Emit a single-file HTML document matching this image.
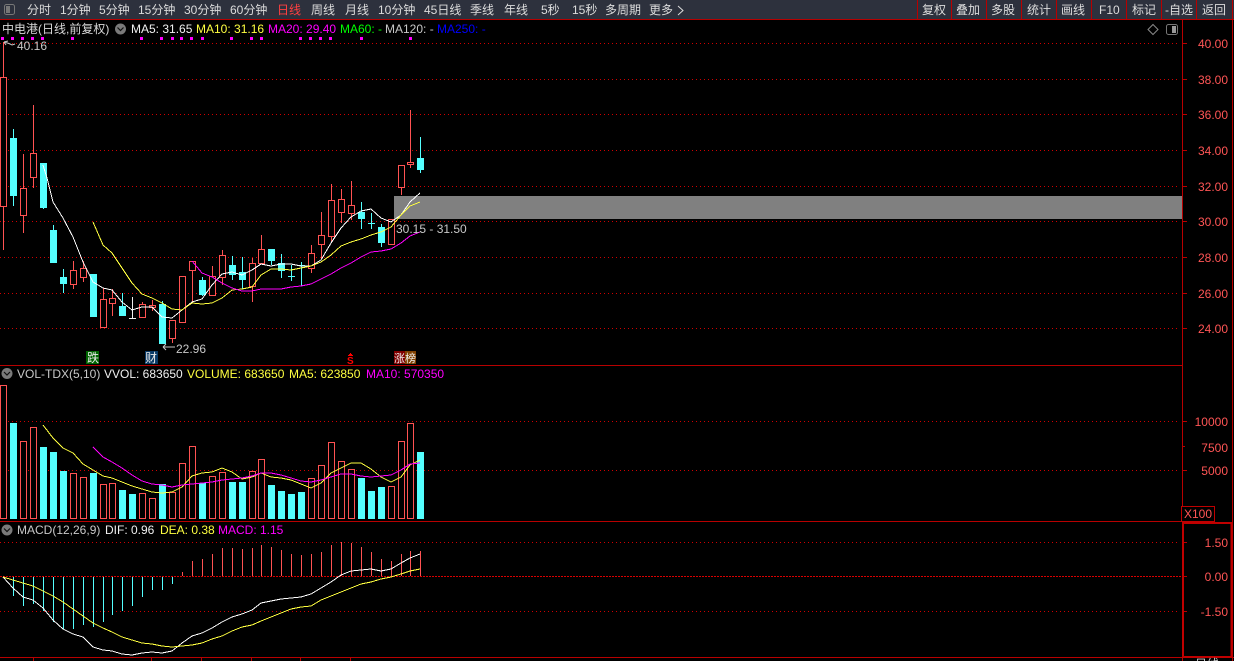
<!DOCTYPE html>
<html><head><meta charset="utf-8"><style>
html,body{margin:0;padding:0;background:#000;width:1234px;height:661px;overflow:hidden}
svg{display:block;position:absolute;left:0;top:0}
text{font-family:"Liberation Sans","WenQuanYi Zen Hei","Noto Sans CJK SC",sans-serif;font-size:12px;white-space:pre}
.c{shape-rendering:crispEdges}
.m{fill:none;shape-rendering:crispEdges}
</style></head><body>
<svg width="1234" height="661" viewBox="0 0 1234 661" xmlns="http://www.w3.org/2000/svg">
<rect x="0" y="0" width="1234" height="19" fill="#2d313d"/>
<!-- frame -->
<g class="c" stroke="#b80000" fill="none">
<path d="M0 19.5H1234M0 365.5H1182M0 521.5H1182M0 657.5H1234M1182.5 19V661M1232.5 0V661"/>
<path d="M917.5 0V19M951.5 0V19M986.5 0V19M1021.5 0V19M1056.5 0V19M1091.5 0V19M1126.5 0V19M1161.5 0V19M1196.5 0V19"/>
<path d="M33.5 657V661M151.5 657V661M201.5 657V661M251.5 657V661M300.5 657V661M350.5 657V661"/>
<path d="M1182 43.5H1187M1182 79.5H1187M1182 114.5H1187M1182 150.5H1187M1182 186.5H1187M1182 221.5H1187M1182 257.5H1187M1182 293.5H1187M1182 328.5H1187M1182 421.5H1187M1182 446.5H1185M1182 470.5H1187M1182 542.5H1187M1182 576.5H1187M1182 611.5H1187M1182 559.5H1184M1182 594.5H1184"/>
</g>
<!-- grids -->
<g class="c" stroke="#d00000" fill="none" stroke-dasharray="1 3">
<path d="M0 43.5H1178M0 79.5H1178M0 114.5H1178M0 150.5H1178M0 186.5H1178M0 221.5H1178M0 257.5H1178M0 293.5H1178M0 328.5H1178"/>
<path d="M0 421.5H1178M0 470.5H1178M0 542.5H1178M0 611.5H1178"/>
</g>
<path class="c" d="M0 576.5H1182" stroke="#d80000" stroke-dasharray="2 1" fill="none"/>
<rect class="c" x="394" y="196" width="788" height="23" fill="#808080"/>
<!-- top bar left icon -->
<rect x="4.500" y="4.500" width="10" height="10" rx="2" fill="#2d313d" stroke="#777"/>
<rect class="c" x="6" y="6" width="4" height="7" fill="#777"/>
<!-- toolbar text -->
<g fill="#dcdcdc">
<text x="27" y="14">分时</text><text x="60" y="14">1分钟</text><text x="99" y="14">5分钟</text><text x="138" y="14">15分钟</text><text x="184" y="14">30分钟</text><text x="230" y="14">60分钟</text>
<text x="277" y="14" fill="#ff4040">日线</text>
<text x="311" y="14">周线</text><text x="345" y="14">月线</text><text x="378" y="14">10分钟</text><text x="424" y="14">45日线</text><text x="470" y="14">季线</text><text x="504" y="14">年线</text><text x="541" y="14">5秒</text><text x="572" y="14">15秒</text><text x="605" y="14">多周期</text><text x="649" y="14">更多</text>
<text x="922" y="14">复权</text><text x="956" y="14">叠加</text><text x="991" y="14">多股</text><text x="1027" y="14">统计</text><text x="1061" y="14">画线</text><text x="1099" y="14">F10</text><text x="1132" y="14">标记</text><text x="1165" y="14">-自选</text><text x="1202" y="14">返回</text>
</g>
<path d="M678 6L683 10.500L678 15" fill="none" stroke="#dcdcdc"/>
<!-- info row -->
<text x="2" y="33" fill="#d8d8d8">中电港(日线,前复权)</text>
<circle cx="120.500" cy="29" r="5.500" fill="#7a7a7a"/><path d="M117.500 27.500L120.500 30.500L123.500 27.500" stroke="#111" fill="none" stroke-width="1.200"/>
<text x="131" y="33" fill="#f0f0f0">MA5: 31.65</text>
<text x="196" y="33" fill="#ffff40">MA10: 31.16</text>
<text x="268" y="33" fill="#ff00ff">MA20: 29.40</text>
<text x="340" y="33" fill="#00ff00">MA60: -</text>
<text x="385" y="33" fill="#c8c8c8">MA120: -</text>
<text x="437" y="33" fill="#0000ff">MA250: -</text>
<path class="c" fill="#ff00ff" d="M1 37h3v3h-3zM11 37h3v3h-3zM21 37h3v3h-3zM31 37h3v3h-3zM41 37h3v3h-3zM71 37h3v3h-3zM140 37h3v3h-3zM160 37h3v3h-3zM171 37h3v3h-3zM180 37h3v3h-3zM190 37h3v3h-3zM201 37h3v3h-3zM230 37h3v3h-3zM250 37h3v3h-3zM260 37h3v3h-3zM299 37h3v3h-3zM309 37h3v3h-3zM319 37h3v3h-3zM329 37h3v3h-3zM360 37h3v3h-3zM409 37h3v3h-3z"/>
<path d="M1153 24.500L1158 29.500L1153 34.500L1148 29.500Z" fill="none" stroke="#8a8a8a"/>
<rect x="1166.500" y="24.500" width="11" height="10" rx="2" fill="none" stroke="#777"/><rect class="c" x="1172" y="26" width="4" height="7" fill="#999"/>
<!-- red wicks -->
<path class="c" stroke="#ff5252" fill="none" d="M3.500 42V250M23.500 154V233M33.500 105V188M73.500 261V289M83.500 261V282M103.500 288V328M112.500 289V316M142.500 302V318M152.500 300V311M172.500 320V343M182.500 276V323M192.500 261V303M212.500 266V296M222.500 250V285M252.500 258V302M261.500 235V263M311.500 245V273M321.500 212V259M331.500 184V243M341.500 189V223M351.500 181V220M391.500 219V245M401.500 165V195M410.500 110V168"/>
<!-- cyan wicks -->
<path class="c" stroke="#54ffff" fill="none" d="M13.500 129V206M43.500 163V209M53.500 225V263M63.500 269V293M93.500 274V317M122.500 293V316M162.500 301V344M202.500 277V296M232.500 256V280M242.500 257V289M271.500 249V265M281.500 254V278M291.500 265V281M288 276.500H295M301.500 262V286M298 265.500H305M361.500 202V229M371.500 213V229M368 223.500H375M381.500 224V247M420.500 137V173"/>
<path class="c" stroke="#f0f0f0" fill="none" d="M132.500 297V318M129 318.500H136"/>
<!-- red bodies -->
<g class="c" fill="#000" stroke="#ff5252">
<rect x="0.500" y="77.500" width="6" height="129"/><rect x="20.500" y="188.500" width="6" height="27"/><rect x="30.500" y="153.500" width="6" height="24"/><rect x="70.500" y="270.500" width="6" height="14"/><rect x="80.500" y="268.500" width="6" height="9"/><rect x="100.500" y="299.500" width="6" height="28"/><rect x="109.500" y="298.500" width="6" height="5"/><rect x="139.500" y="304.500" width="6" height="13"/><rect x="149.500" y="305.500" width="6" height="2"/><rect x="169.500" y="320.500" width="6" height="18"/><rect x="179.500" y="276.500" width="6" height="46"/><rect x="189.500" y="261.500" width="6" height="9"/><rect x="209.500" y="276.500" width="6" height="19"/><rect x="219.500" y="255.500" width="6" height="22"/><rect x="249.500" y="263.500" width="6" height="23"/><rect x="258.500" y="249.500" width="6" height="14"/><rect x="308.500" y="253.500" width="6" height="15"/><rect x="318.500" y="235.500" width="6" height="9"/><rect x="328.500" y="200.500" width="6" height="36"/><rect x="338.500" y="199.500" width="6" height="13"/><rect x="348.500" y="205.500" width="6" height="8"/><rect x="388.500" y="219.500" width="6" height="25"/><rect x="398.500" y="165.500" width="6" height="22"/><rect x="407.500" y="162.500" width="6" height="2"/>
</g>
<!-- cyan bodies -->
<g class="c" fill="#54ffff">
<rect x="10" y="138" width="7" height="58"/><rect x="40" y="163" width="7" height="45"/><rect x="50" y="230" width="7" height="33"/><rect x="60" y="277" width="7" height="7"/><rect x="90" y="274" width="7" height="43"/><rect x="119" y="306" width="7" height="10"/><rect x="159" y="304" width="7" height="40"/><rect x="199" y="280" width="7" height="15"/><rect x="229" y="265" width="7" height="10"/><rect x="239" y="272" width="7" height="8"/><rect x="268" y="249" width="7" height="12"/><rect x="278" y="263" width="7" height="8"/><rect x="358" y="212" width="7" height="7"/><rect x="378" y="227" width="7" height="16"/><rect x="417" y="158" width="7" height="12"/>
</g>
<!-- price MAs -->
<polyline class="m" stroke="#ffffff" points="43,165 47,178 53,202 63,218 73,237 83,262 93,282 103,288 112,290 122,302 132,310 142,307 152,307 162,317 172,318 182,310 192,302 202,299 212,285 222,274 232,272 242,275 252,270 261,264 271,266 281,264 291,264 301,266 311,266 321,260 331,243 341,228 351,217 361,211 371,209 381,218 391,222 401,215 410,202 420,193"/>
<polyline class="m" stroke="#ffff40" points="93,222 103,245 112,253 122,268 132,283 142,294 152,298 162,303 172,309 182,310 192,303 202,304 212,303 222,298 232,290 242,289 252,287 261,275 271,269 281,269 291,270 301,268 311,266 321,262 331,255 341,246 351,242 361,239 371,235 381,232 391,227 401,215 410,206 420,202"/>
<polyline class="m" stroke="#ff00ff" points="192,261 202,273 212,277 222,283 232,288 242,291 252,291 261,289 271,289 281,289 291,287 301,286 311,284 321,279 331,274 341,268 351,263 361,257 371,252 381,251 391,249 401,243 410,236 420,232"/>
<!-- price annotations -->
<path d="M4 42L9 43.500L12 45L15 44M4 42L8 41M4 42L6 45" stroke="#c8c8c8" fill="none"/>
<text x="17" y="50" fill="#c8c8c8">40.16</text>
<path d="M163 347H175M163 347L166 344M163 347L166 350" stroke="#c8c8c8" fill="none"/>
<text x="176" y="353" fill="#c8c8c8">22.96</text>
<text x="396" y="233" fill="#c8c8c8">30.15 - 31.50</text>
<rect class="c" x="86" y="351" width="13" height="13" fill="#006400"/><text x="87" y="362" fill="#e8e8e8">跌</text>
<rect class="c" x="145" y="351" width="13" height="13" fill="#0a3a66"/><text x="145" y="362" fill="#e8e8e8">财</text>
<path class="c" d="M350 353h1v1h1v1h1v1h-5v-1h1v-1h1z" fill="#ff0000"/>
<text x="347" y="364" fill="#ff0000" font-weight="bold" style="font-size:10px">S</text>
<rect class="c" x="394" y="351" width="11" height="13" fill="#800000"/><rect class="c" x="405" y="351" width="11" height="13" fill="#804000"/>
<text x="394" y="362" fill="#f0f0f0" style="font-size:11px">涨</text><text x="405" y="362" fill="#f0f0f0" style="font-size:11px">榜</text>
<!-- axis labels -->
<g fill="#ff5555" text-anchor="end">
<text x="1228" y="48">40.00</text><text x="1228" y="84">38.00</text><text x="1228" y="119">36.00</text><text x="1228" y="155">34.00</text><text x="1228" y="191">32.00</text><text x="1228" y="226">30.00</text><text x="1228" y="262">28.00</text><text x="1228" y="298">26.00</text><text x="1228" y="333">24.00</text>
<text x="1228" y="426">10000</text><text x="1228" y="452">7500</text><text x="1228" y="475">5000</text>
<text x="1228" y="547">1.50</text><text x="1228" y="581">0.00</text><text x="1228" y="616">-1.50</text>
</g>
<!-- volume header -->
<circle cx="7" cy="373.500" r="5.500" fill="#7a7a7a"/><path d="M4 372L7 375L10 372" stroke="#111" fill="none" stroke-width="1.200"/>
<text x="17" y="378" fill="#c8c8c8">VOL-TDX(5,10)</text>
<text x="104" y="378" fill="#f0f0f0">VVOL: 683650</text>
<text x="187" y="378" fill="#ffff40">VOLUME: 683650</text>
<text x="289" y="378" fill="#ffff40">MA5: 623850</text>
<text x="366" y="378" fill="#ff00ff">MA10: 570350</text>
<!-- volume bars -->
<g class="c" fill="#000" stroke="#ff5252">
<rect x="0.500" y="385.500" width="6" height="133"/><rect x="20.500" y="441.500" width="6" height="77"/><rect x="30.500" y="427.500" width="6" height="91"/><rect x="70.500" y="473.500" width="6" height="45"/><rect x="80.500" y="477.500" width="6" height="41"/><rect x="100.500" y="484.500" width="6" height="34"/><rect x="109.500" y="483.500" width="6" height="35"/><rect x="139.500" y="493.500" width="6" height="25"/><rect x="149.500" y="498.500" width="6" height="20"/><rect x="169.500" y="492.500" width="6" height="26"/><rect x="179.500" y="463.500" width="6" height="55"/><rect x="189.500" y="446.500" width="6" height="72"/><rect x="209.500" y="476.500" width="6" height="42"/><rect x="219.500" y="472.500" width="6" height="46"/><rect x="249.500" y="471.500" width="6" height="47"/><rect x="258.500" y="459.500" width="6" height="59"/><rect x="308.500" y="478.500" width="6" height="40"/><rect x="318.500" y="465.500" width="6" height="53"/><rect x="328.500" y="442.500" width="6" height="76"/><rect x="338.500" y="461.500" width="6" height="57"/><rect x="348.500" y="469.500" width="6" height="49"/><rect x="388.500" y="486.500" width="6" height="32"/><rect x="398.500" y="441.500" width="6" height="77"/><rect x="407.500" y="423.500" width="6" height="95"/>
</g>
<g class="c" fill="#54ffff">
<rect x="10" y="423" width="7" height="96"/><rect x="40" y="447" width="7" height="72"/><rect x="50" y="452" width="7" height="67"/><rect x="60" y="471" width="7" height="48"/><rect x="90" y="473" width="7" height="46"/><rect x="119" y="490" width="7" height="29"/><rect x="129" y="494" width="7" height="25"/><rect x="159" y="484" width="7" height="35"/><rect x="199" y="483" width="7" height="36"/><rect x="229" y="482" width="7" height="37"/><rect x="239" y="482" width="7" height="37"/><rect x="268" y="485" width="7" height="34"/><rect x="278" y="491" width="7" height="28"/><rect x="288" y="494" width="7" height="25"/><rect x="298" y="492" width="7" height="27"/><rect x="358" y="478" width="7" height="41"/><rect x="368" y="491" width="7" height="28"/><rect x="378" y="487" width="7" height="32"/><rect x="417" y="452" width="7" height="67"/>
</g>
<polyline class="m" stroke="#ffff40" points="43,425 53,438 63,448 73,453 83,464 93,470 103,476 112,478 122,482 132,486 142,489 152,492 162,493 172,492 182,487 192,476 202,473 212,472 222,468 232,472 242,479 252,477 261,473 271,477 281,478 291,480 301,484 311,488 321,483 331,473 341,468 351,463 361,463 371,469 381,477 391,482 401,477 410,465 420,460"/>
<polyline class="m" stroke="#ff00ff" points="93,447 103,457 112,462 122,468 132,475 142,481 152,484 162,485 172,487 182,485 192,484 202,483 212,482 222,480 232,479 242,478 252,476 261,473 271,473 281,475 291,478 301,481 311,482 321,480 331,477 341,474 351,474 361,476 371,477 381,476 391,475 401,470 410,464 420,463"/>
<!-- macd header -->
<circle cx="7" cy="530" r="5.500" fill="#7a7a7a"/><path d="M4 528.500L7 531.500L10 528.500" stroke="#111" fill="none" stroke-width="1.200"/>
<text x="17" y="534" fill="#c8c8c8">MACD(12,26,9)</text>
<text x="105" y="534" fill="#f0f0f0">DIF: 0.96</text>
<text x="160" y="534" fill="#ffff40">DEA: 0.38</text>
<text x="218" y="534" fill="#ff00ff">MACD: 1.15</text>
<!-- macd bars -->
<path class="c" stroke="#54ffff" fill="none" d="M13.500 577V596M23.500 577V606M33.500 577V604M43.500 577V611M53.500 577V622M63.500 577V629M73.500 577V629M83.500 577V625M93.500 577V627M103.500 577V622M112.500 577V615M122.500 577V611M132.500 577V606M142.500 577V597M152.500 577V590M162.500 577V590M172.500 577V584"/>
<path class="c" stroke="#ff5252" fill="none" d="M182.500 572V576M192.500 561V576M202.500 559V576M212.500 554V576M222.500 548V576M232.500 548V576M242.500 549V576M252.500 548V576M261.500 545V576M271.500 547V576M281.500 550V576M291.500 554V576M301.500 555V576M311.500 554V576M321.500 552V576M331.500 545V576M341.500 542V576M351.500 543V576M361.500 547V576M371.500 552V576M381.500 559V576M391.500 561V576M401.500 554V576M410.500 551V576M420.500 551V576"/>
<polyline class="m" stroke="#ffffff" points="3,577 13,588 23,597 33,600 43,608 53,620 63,629 73,634 83,637 93,647 103,650 112,651 122,654 132,655 142,653 152,652 162,653 172,651 182,643 192,636 202,633 212,628 222,622 232,617 242,614 252,610 261,603 271,601 281,599 291,598 301,597 311,594 321,588 331,582 341,575 351,571 361,570 371,569 381,571 391,569 401,563 410,558 420,554"/>
<polyline class="m" stroke="#ffff40" points="3,577 13,580 23,583 33,586 43,591 53,596 63,602 73,609 83,616 93,623 103,628 112,632 122,637 132,640 142,643 152,644 162,646 172,647 182,646 192,645 202,643 212,639 222,636 232,631 242,627 252,625 261,621 271,617 281,613 291,609 301,607 311,606 321,600 331,596 341,592 351,588 361,584 371,582 381,579 391,577 401,574 410,571 420,569"/>
<!-- right boxes -->
<rect class="c" x="1181.500" y="506.500" width="33" height="15" fill="#000" stroke="#c00000"/>
<text x="1184" y="518" fill="#ff5555">X100</text>
<rect class="c" x="1183" y="523" width="48.500" height="134" fill="none" stroke="#c00000" stroke-width="2"/>
<text x="1195" y="668" fill="#c8c8c8">日线</text>
</svg>
</body></html>
